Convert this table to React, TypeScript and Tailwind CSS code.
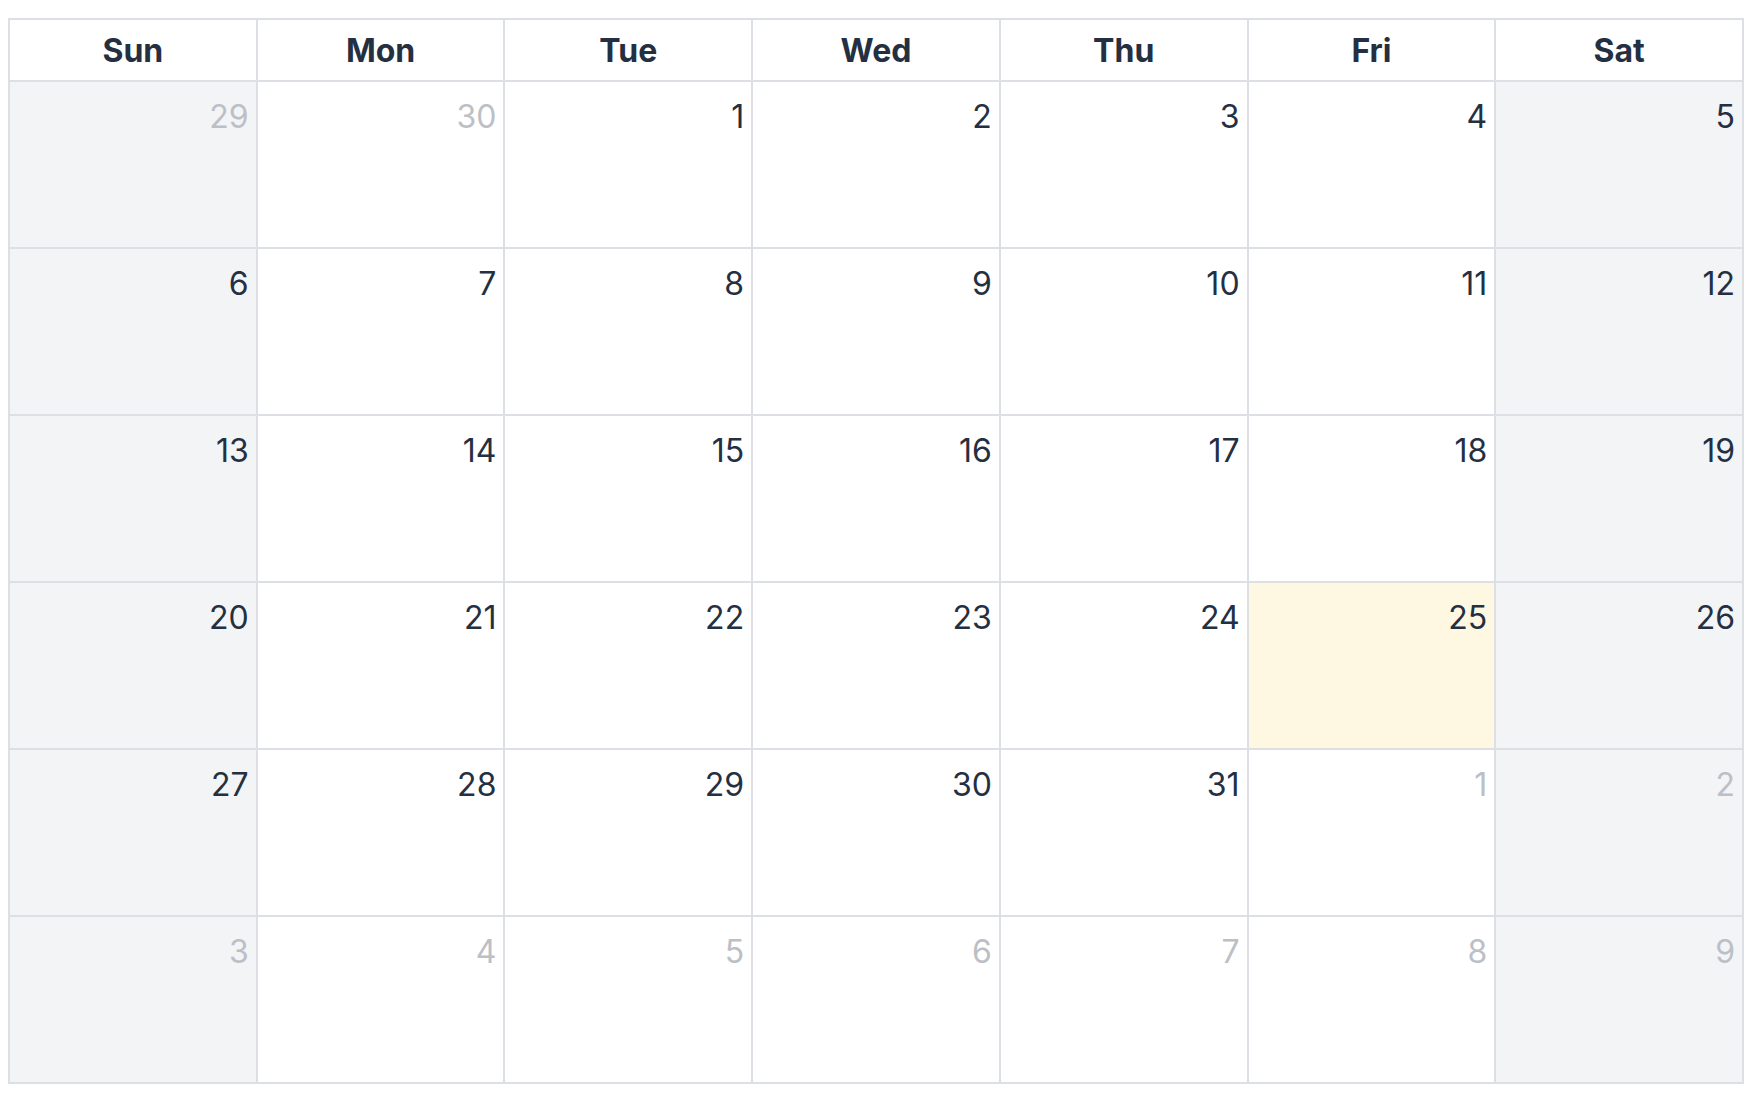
import React from 'react';

interface DayCell {
  day: number;
  muted: boolean;
  weekend: boolean;
  today: boolean;
}

const weekdays = ['Sun', 'Mon', 'Tue', 'Wed', 'Thu', 'Fri', 'Sat'];

function buildDays(): DayCell[] {
  const days: DayCell[] = [];
  const leading = [29, 30];
  leading.forEach((d) => days.push({ day: d, muted: true, weekend: false, today: false }));
  for (let d = 1; d <= 31; d++) days.push({ day: d, muted: false, weekend: false, today: d === 25 });
  let next = 1;
  while (days.length < 42) days.push({ day: next++, muted: true, weekend: false, today: false });
  return days.map((cell, i) => ({ ...cell, weekend: i % 7 === 0 || i % 7 === 6 }));
}

function App() {
  const days = buildDays();

  return (
    <div className="min-h-screen bg-white pt-[18px] pl-[8px] font-['Inter','Liberation_Sans',sans-serif]">
      <div className="grid w-[1736px] grid-cols-7 border-l-2 border-t-2 border-[#dcdfe4]">
        {weekdays.map((name) => (
          <div
            key={name}
            className="flex h-[62px] items-center justify-center border-b-2 border-r-2 border-[#dcdfe4] pt-[2px] text-[32px] font-bold text-[#243042]"
          >
            {name}
          </div>
        ))}
        {days.map((cell, i) => (
          <div
            key={i}
            className={`h-[167px] border-b-2 border-r-2 border-[#dcdfe4] pr-[7px] pt-[11px] text-right text-[32px] leading-[48px] ${
              cell.today ? 'bg-[#fef8e3]' : cell.weekend ? 'bg-[#f3f4f6]' : 'bg-white'
            } ${cell.muted ? 'text-[#bcc0c6]' : 'text-[#243042]'}`}
          >
            {cell.day}
          </div>
        ))}
      </div>
    </div>
  );
}

export default App;
